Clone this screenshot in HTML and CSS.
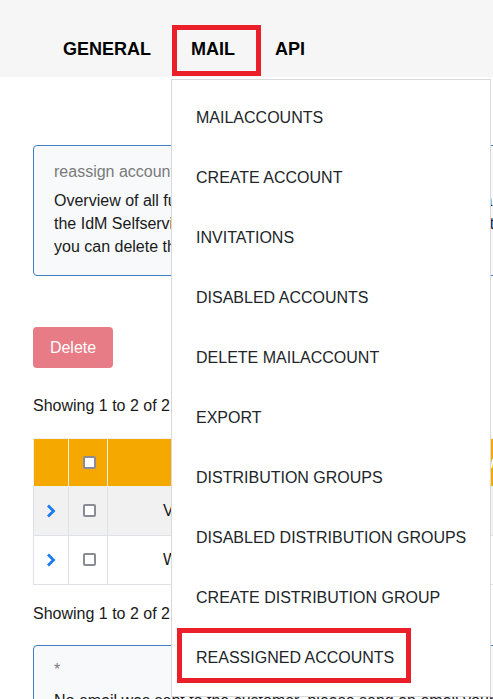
FILE: index.html
```html
<!DOCTYPE html>
<html>
<head>
<meta charset="utf-8">
<link rel="stylesheet" href="styles.css">
</head>
<body>
<header class="topnav">
  <div class="nav-item">GENERAL</div>
  <div class="nav-item nav-open">MAIL
    <span class="annot annot-nav"></span>
    <ul class="dropdown">
      <li>MAILACCOUNTS</li>
      <li>CREATE ACCOUNT</li>
      <li>INVITATIONS</li>
      <li>DISABLED ACCOUNTS</li>
      <li>DELETE MAILACCOUNT</li>
      <li>EXPORT</li>
      <li>DISTRIBUTION GROUPS</li>
      <li>DISABLED DISTRIBUTION GROUPS</li>
      <li>CREATE DISTRIBUTION GROUP</li>
      <li class="marked">REASSIGNED ACCOUNTS<span class="annot annot-item"></span></li>
    </ul>
  </div>
  <div class="nav-item">API</div>
</header>

<main class="content">
  <section class="info">
    <div class="info-title">reassign accounts</div>
    <p class="info-text">Overview of all functional mailboxes that were reassigned to another owner via<br>the IdM Selfservice. As soon as the new owner has accepted the <span class="link">reassignment</span>,<br>you can delete the entries from this list.</p>
  </section>

  <button class="btn-delete">Delete</button>

  <div class="count">Showing 1 to 2 of 2 entries</div>

  <table class="grid">
    <thead>
      <tr>
        <th class="c-exp"></th>
        <th class="c-chk"><span class="box"></span></th>
        <th class="c-name">Name</th>
        <th class="c-rest">Owner</th>
      </tr>
    </thead>
    <tbody>
      <tr class="odd">
        <td class="c-exp"><svg class="chev" viewBox="0 0 10 14" width="10" height="14"><path d="M2 1.5 L7.5 7 L2 12.5" fill="none" stroke="#1a7cf0" stroke-width="2.8" stroke-linecap="butt"/></svg></td>
        <td class="c-chk"><span class="box"></span></td>
        <td class="c-name">Vertrieb Nord</td>
        <td class="c-rest">mueller</td>
      </tr>
      <tr>
        <td class="c-exp"><svg class="chev" viewBox="0 0 10 14" width="10" height="14"><path d="M2 1.5 L7.5 7 L2 12.5" fill="none" stroke="#1a7cf0" stroke-width="2.8" stroke-linecap="butt"/></svg></td>
        <td class="c-chk"><span class="box"></span></td>
        <td class="c-name">Werkstatt</td>
        <td class="c-rest">schmidt</td>
      </tr>
    </tbody>
  </table>

  <div class="count count-2">Showing 1 to 2 of 2 entries</div>

  <section class="info info-2">
    <div class="info-title">*</div>
    <p class="info-text">No email was sent to the customer, please send an email yourself.</p>
  </section>
</main>
</body>
</html>
```
FILE: styles.css
```css
* { box-sizing: border-box; }
html, body {
  margin: 0;
  padding: 0;
  overflow: hidden;
  width: 493px;
  height: 699px;
  background: #fff;
}
body {
  font-family: "Liberation Sans", Arial, sans-serif;
  font-size: 16px;
  color: #1a1a1a;
}

.topnav {
  display: flex;
  height: 77px;
  background: #f6f6f6;
  padding-left: 43px;
  position: relative;
  z-index: 5;
}
.nav-item {
  position: relative;
  padding: 37px 20px 16px 20px;
  line-height: 24px;
  font-size: 18px;
  font-weight: bold;
  color: #000;
}
.annot {
  position: absolute;
  border: 5px solid #ea1f29;
  pointer-events: none;
}
.annot-nav {
  left: 1px;
  top: 25px;
  width: 89px;
  height: 51px;
}

.dropdown {
  position: absolute;
  top: 79px;
  left: 0;
  width: 320px;
  margin: 0;
  padding: 8px 0 8px 0;
  list-style: none;
  background: #fff;
  border: 1px solid #d9d9d9;
  font-size: 16px;
  font-weight: normal;
  color: #212529;
}
.dropdown li {
  position: relative;
  height: 60px;
  line-height: 60px;
  padding-left: 24px;
  white-space: nowrap;
}
.annot-item {
  left: 5px;
  top: 0;
  width: 234px;
  height: 55px;
}

.content {
  width: 640px;
  padding-left: 33px;
  padding-top: 68px;
}

.info {
  width: 620px;
  background: #f7f9fb;
  border: 1px solid #3f7fc0;
  border-radius: 4px;
  padding: 14px 20px 17px 20px;
}
.info-title {
  color: #7a7a7a;
  line-height: 23px;
  white-space: nowrap;
}
.info-text {
  margin: 6px 0 0 0;
  line-height: 23px;
  white-space: nowrap;
}
.link { color: #e67e22; }

.btn-delete {
  display: block;
  margin-top: 51px;
  width: 80px;
  height: 41px;
  border: 0;
  border-radius: 4px;
  background: #e77b86;
  color: #fff;
  font-family: "Liberation Sans", Arial, sans-serif;
  font-size: 16px;
  padding: 0;
}

.count {
  margin-top: 26px;
  line-height: 24px;
}

.grid {
  margin-top: 20px;
  width: 600px;
  border-collapse: collapse;
}
.grid th, .grid td {
  border: 1px solid #dee2e6;
  padding: 0;
  height: 48px;
  vertical-align: middle;
}
.grid tbody td { height: 49px; }
.grid thead th {
  background: #f5a900;
  border-color: #f0f0f0;
  font-weight: bold;
  color: #fff;
}
.grid .odd td { background: #f1f1f1; }
.grid .c-exp { width: 35px; text-align: center; }
.grid .c-chk { width: 39px; text-align: center; }
.grid td.c-name { width: 260px; padding-left: 55px; text-align: left; }
.grid th.c-name { text-align: center; }
.chev { display: block; margin: 0 0 0 12px; }
.box {
  display: inline-block;
  width: 13px;
  height: 13px;
  border: 2px solid #8b8b96;
  border-radius: 2px;
  background: #fff;
  vertical-align: middle;
  position: relative;
  top: -1px;
  left: 1px;
}

.count-2 { margin-top: 17px; }

.info-2 {
  margin-top: 19px;
  padding-top: 12px;
}
.info-2 .info-text { margin-top: 8px; }
```
